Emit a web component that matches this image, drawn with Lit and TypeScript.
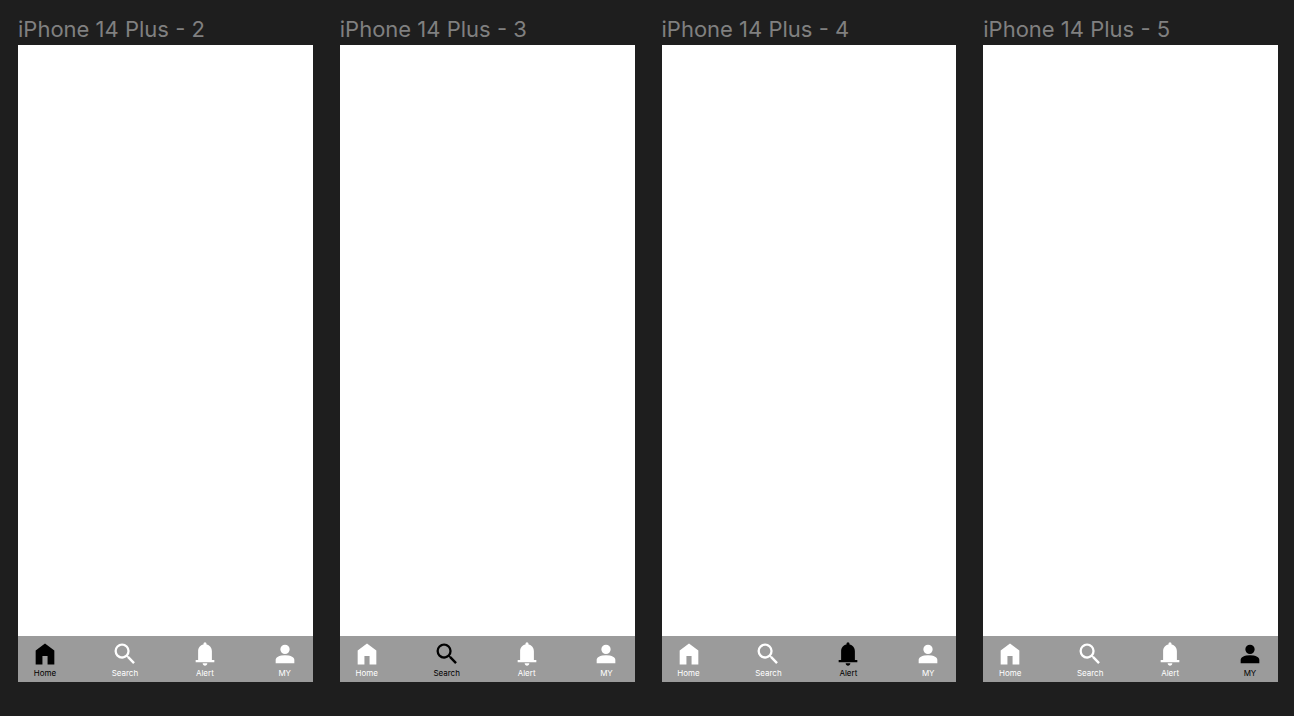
import { LitElement, html, css, svg } from "lit";
import { customElement, property } from "lit/decorators.js";

const icons = {
  home: svg`<path d="M4 21V9l8-6 8 6v12h-5.8v-7.2H9.8V21z" />`,
  search: svg`<path d="M15.5 14h-.79l-.28-.27A6.471 6.471 0 0 0 16 9.5 6.5 6.5 0 1 0 9.5 16c1.61 0 3.09-.59 4.23-1.57l.27.28v.79l5 4.99L20.49 19zm-6 0C7.01 14 5 11.99 5 9.5S7.01 5 9.5 5 14 7.01 14 9.5 11.99 14 9.5 14z" />`,
  alert: svg`<path d="M4 19v-1.9h2.1V9.6C6.1 6.6 8 4.4 10.7 3.8v-.6a1.3 1.3 0 0 1 2.6 0v.6c2.7.6 4.6 2.8 4.6 5.8v7.5H20V19zm8 3q-.825 0-1.412-.587T10 20h4q0 .825-.587 1.413T12 22" />`,
  my: svg`<path d="M12 12q-1.65 0-2.825-1.175T8 8t1.175-2.825T12 4t2.825 1.175T16 8t-1.175 2.825T12 12m-8 8v-2.8q0-.85.438-1.562T5.6 14.55q1.55-.775 3.15-1.162T12 13t3.25.388 3.15 1.162q.725.375 1.163 1.088T20 17.2V20z" />`,
};

type TabId = keyof typeof icons;

const tabs: { id: TabId; label: string }[] = [
  { id: "home", label: "Home" },
  { id: "search", label: "Search" },
  { id: "alert", label: "Alert" },
  { id: "my", label: "MY" },
];

@customElement("phone-frame")
class PhoneFrame extends LitElement {
  @property() name = "";
  @property() active: TabId = "home";

  static styles = css`
    :host {
      display: flex;
      flex-direction: column;
      min-width: 0;
    }
    .name {
      margin: 0 0 4px;
      color: #808080;
      font-size: 22px;
      font-weight: 400;
      line-height: 24px;
      white-space: nowrap;
    }
    .screen {
      display: flex;
      flex: 1;
      flex-direction: column;
      justify-content: flex-end;
      background: #fff;
    }
    .bar {
      display: flex;
      justify-content: space-between;
      padding: 4px 1px 3px 0;
      background: #9b9b9b;
    }
    .tab {
      display: flex;
      flex-direction: column;
      align-items: center;
      width: 54px;
      padding: 0;
      border: 0;
      background: none;
      color: #fff;
      font: inherit;
      font-size: 8px;
      line-height: 11px;
      cursor: pointer;
    }
    .tab[aria-current="page"] {
      color: #000;
    }
    .icon {
      display: block;
      width: 28px;
      height: 28px;
      fill: currentColor;
    }
  `;

  render() {
    return html`
      <h2 class="name">${this.name}</h2>
      <div class="screen">
        <nav class="bar" aria-label=${this.name}>
          ${tabs.map(
            (tab) => html`
              <button
                class="tab"
                type="button"
                aria-current=${tab.id === this.active ? "page" : "false"}
                @click=${() => (this.active = tab.id)}
              >
                <svg class="icon" viewBox="0 0 24 24" aria-hidden="true">${icons[tab.id]}</svg>
                <span>${tab.label}</span>
              </button>
            `
          )}
        </nav>
      </div>
    `;
  }
}

@customElement("app-root")
class AppRoot extends LitElement {
  static styles = css`
    :host {
      display: block;
      font-family: Inter, "Liberation Sans", sans-serif;
    }
    .canvas {
      display: grid;
      grid-template-columns: repeat(4, minmax(0, 1fr));
      gap: 27px;
      box-sizing: border-box;
      min-height: 100vh;
      padding: 17px 16px 34px 18px;
      background: #1e1e1e;
    }
  `;

  render() {
    return html`
      <main class="canvas">
        ${tabs.map(
          (tab, i) => html`
            <phone-frame name=${`iPhone 14 Plus - ${i + 2}`} active=${tab.id}></phone-frame>
          `
        )}
      </main>
    `;
  }
}
